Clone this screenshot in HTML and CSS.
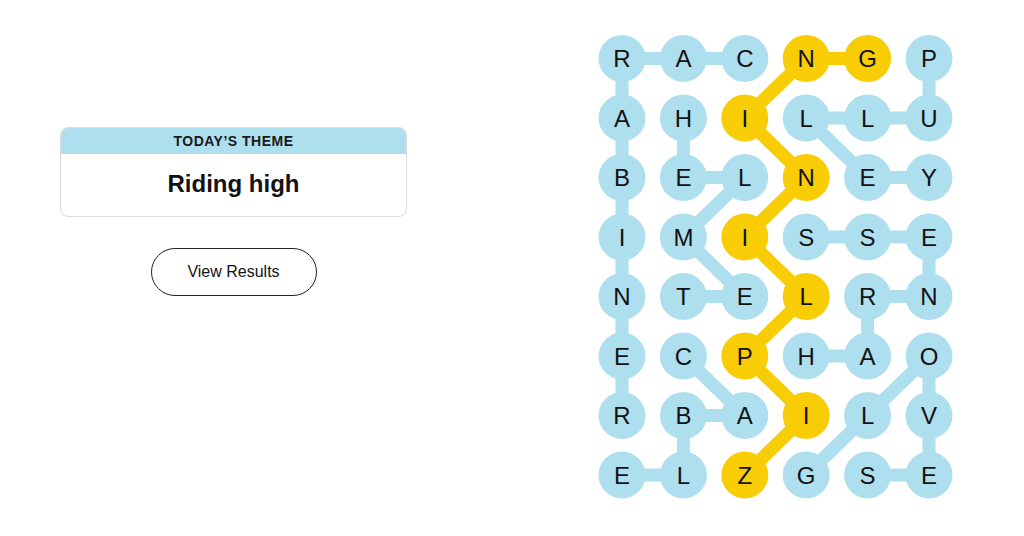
FILE: index.html
```html
<!DOCTYPE html>
<html>
<head>
<meta charset="utf-8">
<link rel="stylesheet" href="styles.css">
</head>
<body>
<div class="page">
  <div class="left">
    <div class="card">
      <div class="card-head">TODAY’S THEME</div>
      <div class="card-body">Riding high</div>
    </div>
    <button class="results">View Results</button>
  </div>
  <svg class="board" width="400" height="536" viewBox="0 0 400 536">
    <g class="links">
      <line x1="42" y1="58.5" x2="164.8" y2="58.5"/>
      <line x1="42" y1="58.5" x2="42" y2="415.5"/>
      <line x1="349" y1="58.5" x2="349" y2="118"/>
      <line x1="349" y1="118" x2="226.2" y2="118"/>
      <line x1="226.2" y1="118" x2="287.6" y2="177.5"/>
      <line x1="287.6" y1="177.5" x2="349" y2="177.5"/>
      <line x1="103.4" y1="118" x2="103.4" y2="177.5"/>
      <line x1="103.4" y1="177.5" x2="164.8" y2="177.5"/>
      <line x1="164.8" y1="177.5" x2="103.4" y2="237"/>
      <line x1="103.4" y1="237" x2="164.8" y2="296.5"/>
      <line x1="164.8" y1="296.5" x2="103.4" y2="296.5"/>
      <line x1="226.2" y1="237" x2="349" y2="237"/>
      <line x1="349" y1="237" x2="349" y2="296.5"/>
      <line x1="349" y1="296.5" x2="287.6" y2="296.5"/>
      <line x1="287.6" y1="296.5" x2="287.6" y2="356"/>
      <line x1="287.6" y1="356" x2="226.2" y2="356"/>
      <line x1="103.4" y1="356" x2="164.8" y2="415.5"/>
      <line x1="164.8" y1="415.5" x2="103.4" y2="415.5"/>
      <line x1="103.4" y1="415.5" x2="103.4" y2="475"/>
      <line x1="103.4" y1="475" x2="42" y2="475"/>
      <line x1="226.2" y1="475" x2="349" y2="356"/>
      <line x1="349" y1="356" x2="349" y2="475"/>
      <line x1="349" y1="475" x2="287.6" y2="475"/>
    </g>
    <polyline class="span-link" points="164.8,475 226.2,415.5 164.8,356 226.2,296.5 164.8,237 226.2,177.5 164.8,118 226.2,58.5 287.6,58.5"/>
    <g class="dots">
      <circle cx="42" cy="58.5" r="23.5"/><circle cx="103.4" cy="58.5" r="23.5"/><circle cx="164.8" cy="58.5" r="23.5"/><circle class="gold" cx="226.2" cy="58.5" r="23.5"/><circle class="gold" cx="287.6" cy="58.5" r="23.5"/><circle cx="349" cy="58.5" r="23.5"/>
      <circle cx="42" cy="118" r="23.5"/><circle cx="103.4" cy="118" r="23.5"/><circle class="gold" cx="164.8" cy="118" r="23.5"/><circle cx="226.2" cy="118" r="23.5"/><circle cx="287.6" cy="118" r="23.5"/><circle cx="349" cy="118" r="23.5"/>
      <circle cx="42" cy="177.5" r="23.5"/><circle cx="103.4" cy="177.5" r="23.5"/><circle cx="164.8" cy="177.5" r="23.5"/><circle class="gold" cx="226.2" cy="177.5" r="23.5"/><circle cx="287.6" cy="177.5" r="23.5"/><circle cx="349" cy="177.5" r="23.5"/>
      <circle cx="42" cy="237" r="23.5"/><circle cx="103.4" cy="237" r="23.5"/><circle class="gold" cx="164.8" cy="237" r="23.5"/><circle cx="226.2" cy="237" r="23.5"/><circle cx="287.6" cy="237" r="23.5"/><circle cx="349" cy="237" r="23.5"/>
      <circle cx="42" cy="296.5" r="23.5"/><circle cx="103.4" cy="296.5" r="23.5"/><circle cx="164.8" cy="296.5" r="23.5"/><circle class="gold" cx="226.2" cy="296.5" r="23.5"/><circle cx="287.6" cy="296.5" r="23.5"/><circle cx="349" cy="296.5" r="23.5"/>
      <circle cx="42" cy="356" r="23.5"/><circle cx="103.4" cy="356" r="23.5"/><circle class="gold" cx="164.8" cy="356" r="23.5"/><circle cx="226.2" cy="356" r="23.5"/><circle cx="287.6" cy="356" r="23.5"/><circle cx="349" cy="356" r="23.5"/>
      <circle cx="42" cy="415.5" r="23.5"/><circle cx="103.4" cy="415.5" r="23.5"/><circle cx="164.8" cy="415.5" r="23.5"/><circle class="gold" cx="226.2" cy="415.5" r="23.5"/><circle cx="287.6" cy="415.5" r="23.5"/><circle cx="349" cy="415.5" r="23.5"/>
      <circle cx="42" cy="475" r="23.5"/><circle cx="103.4" cy="475" r="23.5"/><circle class="gold" cx="164.8" cy="475" r="23.5"/><circle cx="226.2" cy="475" r="23.5"/><circle cx="287.6" cy="475" r="23.5"/><circle cx="349" cy="475" r="23.5"/>
    </g>
    <g class="letters">
      <text x="42" y="67">R</text><text x="103.4" y="67">A</text><text x="164.8" y="67">C</text><text x="226.2" y="67">N</text><text x="287.6" y="67">G</text><text x="349" y="67">P</text>
      <text x="42" y="126.5">A</text><text x="103.4" y="126.5">H</text><text x="164.8" y="126.5">I</text><text x="226.2" y="126.5">L</text><text x="287.6" y="126.5">L</text><text x="349" y="126.5">U</text>
      <text x="42" y="186">B</text><text x="103.4" y="186">E</text><text x="164.8" y="186">L</text><text x="226.2" y="186">N</text><text x="287.6" y="186">E</text><text x="349" y="186">Y</text>
      <text x="42" y="245.5">I</text><text x="103.4" y="245.5">M</text><text x="164.8" y="245.5">I</text><text x="226.2" y="245.5">S</text><text x="287.6" y="245.5">S</text><text x="349" y="245.5">E</text>
      <text x="42" y="305">N</text><text x="103.4" y="305">T</text><text x="164.8" y="305">E</text><text x="226.2" y="305">L</text><text x="287.6" y="305">R</text><text x="349" y="305">N</text>
      <text x="42" y="364.5">E</text><text x="103.4" y="364.5">C</text><text x="164.8" y="364.5">P</text><text x="226.2" y="364.5">H</text><text x="287.6" y="364.5">A</text><text x="349" y="364.5">O</text>
      <text x="42" y="424">R</text><text x="103.4" y="424">B</text><text x="164.8" y="424">A</text><text x="226.2" y="424">I</text><text x="287.6" y="424">L</text><text x="349" y="424">V</text>
      <text x="42" y="483.5">E</text><text x="103.4" y="483.5">L</text><text x="164.8" y="483.5">Z</text><text x="226.2" y="483.5">G</text><text x="287.6" y="483.5">S</text><text x="349" y="483.5">E</text>
    </g>
  </svg>
</div>
</body>
</html>
```

FILE: styles.css
```css
html, body {
  margin: 0;
  padding: 0;
  background: #ffffff;
}
body {
  font-family: "Liberation Sans", Arial, sans-serif;
  color: #000;
}
.page {
  display: flex;
  width: 1024px;
  height: 536px;
  padding-left: 60px;
  box-sizing: border-box;
}
.left {
  width: 347px;
  padding-top: 127px;
  display: flex;
  flex-direction: column;
  align-items: center;
}
.card {
  width: 100%;
  box-sizing: border-box;
  border: 1px solid #dcdcdc;
  border-radius: 8px;
  overflow: hidden;
}
.card-head {
  background: #aedfee;
  height: 26px;
  line-height: 27px;
  text-align: center;
  font-size: 14px;
  font-weight: 700;
  letter-spacing: 0.5px;
  color: #1a1a1a;
}
.card-body {
  height: 62px;
  line-height: 60px;
  text-align: center;
  font-size: 24px;
  font-weight: 700;
  color: #121212;
}
.results {
  margin-top: 31px;
  width: 166px;
  height: 48px;
  border: 1px solid #222;
  border-radius: 24px;
  background: #fff;
  font-family: "Liberation Sans", Arial, sans-serif;
  font-size: 16px;
  color: #121212;
  padding: 0;
}
.board {
  margin-left: 173px;
  flex: none;
}
.links line {
  stroke: #aedfee;
  stroke-width: 13;
  stroke-linecap: round;
}
.span-link {
  fill: none;
  stroke: #f8cd05;
  stroke-width: 13;
  stroke-linejoin: round;
  stroke-linecap: round;
}
.dots circle {
  fill: #aedfee;
}
.dots circle.gold {
  fill: #f8cd05;
}
.letters text {
  font-family: "Liberation Sans", Arial, sans-serif;
  font-size: 24px;
  text-anchor: middle;
  fill: #121212;
}
```
